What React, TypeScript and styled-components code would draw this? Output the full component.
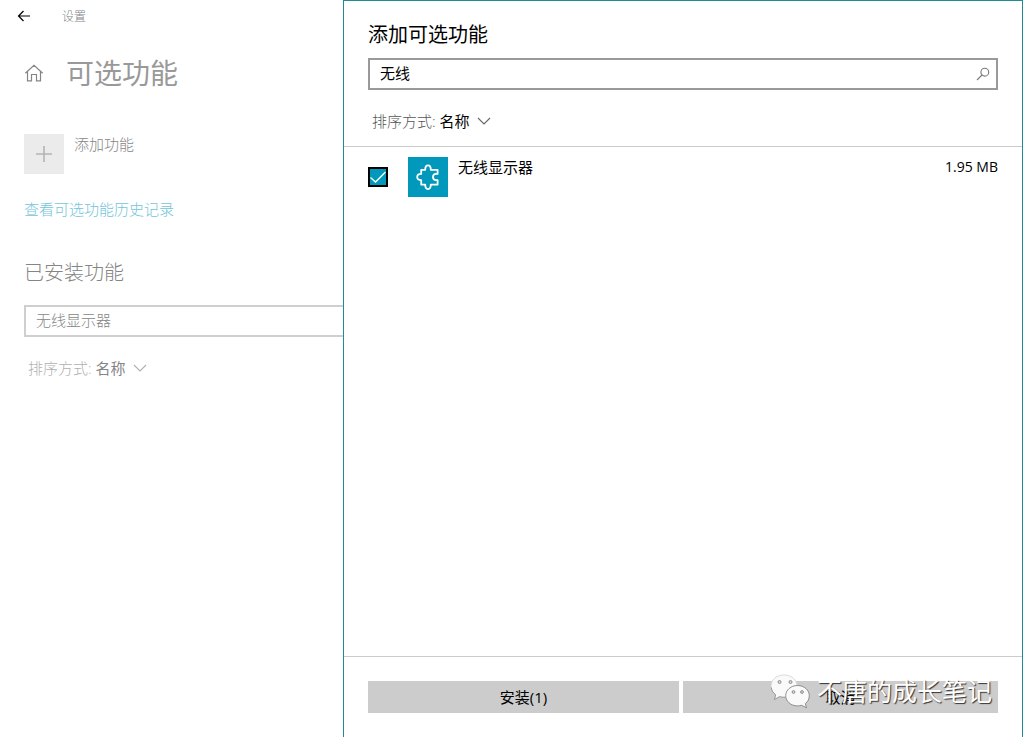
import React, { useState } from 'react';
import styled, { createGlobalStyle } from 'styled-components';

const GlobalStyle = createGlobalStyle`
  *, *::before, *::after { box-sizing: border-box; }
  body {
    margin: 0;
    background: #fff;
    color: #000;
    font: 400 15px/20px "Open Sans", "Noto Sans CJK SC", sans-serif;
  }
  button, input, select { font: inherit; color: inherit; margin: 0; }
  h1, h2, p { margin: 0; font-weight: 400; }
`;

const Page = styled.div`
  display: grid;
  grid-template-columns: 343px minmax(0, 1fr);
  min-height: 100vh;
  padding-right: 3px;
`;

const Settings = styled.main`
  color: #858585;
  font-weight: 300;
  overflow: hidden;
`;

const TitleBar = styled.header`
  display: flex;
  align-items: center;
  gap: 30px;
  height: 34px;
  padding-left: 16px;
  font-size: 12px;
`;

const IconButton = styled.button`
  display: flex;
  padding: 0;
  border: 0;
  background: none;
`;

const BackButton = styled(IconButton)`
  color: #000;
`;

const PageHeading = styled.div`
  display: flex;
  align-items: center;
  gap: 22px;
  height: 78px;
  padding-left: 24px;

  h1 {
    color: #999;
    font-size: 28px;
    line-height: 40px;
  }
`;

const SettingsBody = styled.div`
  padding: 22px 0 0 24px;
`;

const AddFeature = styled.button`
  display: flex;
  align-items: flex-start;
  gap: 10px;
  padding: 0;
  border: 0;
  background: none;
`;

const Tile = styled.span<{ $accent?: boolean }>`
  display: flex;
  flex: none;
  align-items: center;
  justify-content: center;
  width: 40px;
  height: 40px;
  background: ${(p) => (p.$accent ? '#0099bc' : '#ebebeb')};
  color: ${(p) => (p.$accent ? '#fff' : '#b4b4b4')};
`;

const HistoryLink = styled.a`
  display: block;
  margin-top: 25px;
  color: #72c4d8;
  text-decoration: none;
`;

const SectionTitle = styled.h2`
  margin: 40px 0 18px;
  font-size: 20px;
  line-height: 28px;
  font-weight: 300;
`;

const SearchBox = styled.div<{ $muted?: boolean }>`
  display: flex;
  align-items: center;
  height: 32px;
  padding: 0 6px 0 10px;
  border: 2px solid ${(p) => (p.$muted ? '#cfcfcf' : '#999')};
  border-right-width: ${(p) => (p.$muted ? 0 : '2px')};

  input {
    flex: 1;
    min-width: 0;
    height: 28px;
    padding: 0 0 4px;
    border: 0;
    outline: 0;
    background: none;
  }
`;

const SortRow = styled.div<{ $muted?: boolean }>`
  display: flex;
  align-items: center;
  gap: 4px;
  margin-top: 21px;
  padding-left: 4px;

  label { color: ${(p) => (p.$muted ? '#b0b0b0' : '#555')}; font-weight: 300; }
  select {
    appearance: none;
    padding: 0;
    border: 0;
    background: none;
    line-height: 20px;
    font-weight: 400;
  }
  svg { margin-left: 2px; color: ${(p) => (p.$muted ? '#b0b0b0' : '#666')}; }
`;

const Panel = styled.section`
  display: flex;
  flex-direction: column;
  border: 1px solid #1f8b99;
  border-bottom: 0;
`;

const PanelHeader = styled.div`
  padding: 20px 24px 15px;
  border-bottom: 1px solid #ccc;

  h2 {
    margin-bottom: 9px;
    font-size: 20px;
    line-height: 28px;
  }
`;

const FeatureList = styled.div`
  flex: 1;
  padding: 10px 24px;
`;

const FeatureRow = styled.label`
  display: flex;
  align-items: flex-start;
`;

const Checkbox = styled.input`
  appearance: none;
  flex: none;
  width: 20px;
  height: 20px;
  margin: 10px 20px 0 0 !important;
  border: 2px solid #000;

  &:checked {
    background: #0099bc
      url("data:image/svg+xml,%3Csvg xmlns='http://www.w3.org/2000/svg' viewBox='0 0 16 16'%3E%3Cpath d='M.5 8.500 5.500 13 15.500 3' fill='none' stroke='white' stroke-width='1.4'/%3E%3C/svg%3E")
      center / 16px 16px no-repeat;
  }
`;

const FeatureName = styled.span`
  flex: 1;
  padding-left: 10px;
`;

const FeatureSize = styled.span`
  font-size: 14px;
`;

const PanelFooter = styled.footer`
  position: relative;
  display: grid;
  grid-template-columns: 311fr 315fr;
  gap: 4px;
  padding: 24px;
  border-top: 1px solid #ccc;
`;

const ActionButton = styled.button`
  height: 32px;
  padding: 0;
  border: 0;
  background: #ccc;
`;

const Watermark = styled.div`
  position: absolute;
  right: 30px;
  bottom: 28px;
  display: flex;
  align-items: center;
  gap: 7px;
  color: #fff;
  font-size: 25px;
  line-height: 36px;
  text-shadow: 1px 1px 1px #333;
  white-space: nowrap;
  pointer-events: none;
`;

const BackIcon = () => (
  <svg width="16" height="16" viewBox="0 0 16 16" fill="none" stroke="currentColor" strokeWidth="1.2">
    <path d="M14 7H2.500M7.500 2l-5 5 5 5" />
  </svg>
);

const HomeIcon = () => (
  <svg width="20" height="20" viewBox="0 0 20 20" fill="none" stroke="currentColor" strokeWidth="1.2">
    <path d="M1.300 10.300 10 2.200l8.700 8.100M3.500 8.600v9.300h4v-6.400h5v6.400h4V8.600" />
  </svg>
);

const PlusIcon = () => (
  <svg width="18" height="18" viewBox="0 0 18 18" fill="none" stroke="currentColor" strokeWidth="1.6">
    <path d="M9 1v16M1 9h16" />
  </svg>
);

const ChevronIcon = () => (
  <svg width="14" height="8" viewBox="0 0 14 8" fill="none" stroke="currentColor" strokeWidth="1.1">
    <path d="M1 1l6 6 6-6" />
  </svg>
);

const SearchIcon = () => (
  <svg width="14" height="14" viewBox="0 0 14 14" fill="none" stroke="#777" strokeWidth="1.1">
    <circle cx="8.800" cy="5.200" r="3.900" />
    <path d="M6 8 1 13" />
  </svg>
);

const PuzzleIcon = () => (
  <svg width="24" height="28" viewBox="0 0 24 28" fill="none" stroke="currentColor" strokeWidth="1.8" strokeLinejoin="round">
    <path d="M5.200 6.800H9.200C9.200 3.800 10.200 2.300 12 2.300s2.800 1.500 2.800 4.500h6.800v4.100h-1.400c-2 0-3.200 1.300-3.200 3.100s1.200 3.100 3.200 3.100h1.400v4.500h-6.800c0 2.900-1 4.500-2.800 4.500s-2.800-1.600-2.800-4.500H5.200v-4.500C2.500 17.100 1.200 15.800 1.200 14s1.300-3.100 4-3.100z" />
  </svg>
);

const WeChatIcon = () => (
  <svg width="41" height="36" viewBox="0 0 41 36" fill="#fafafa" strokeWidth="0.8">
    <path d="M15 2C7.500 2 2 7 2 13c0 3.600 1.800 6.700 4.700 8.800L5.400 26.500l5.200-2.800c1.400.4 2.900.6 4.400.6 7.500 0 13-5 13-11.300S22.500 2 15 2z" stroke="#d0d0d0" />
    <path d="M2.200 14.500c.4 3 2 5.500 4.500 7.300L5.400 26.500l5.200-2.800c1.800.5 3.700.7 5.500.5" fill="none" stroke="#888" />
    <path d="M28.500 12.500c-6.700 0-11.800 4.600-11.800 10.200s5.100 10.200 11.800 10.200c1.500 0 2.900-.2 4.200-.6l4.800 2.500-1.200-4.100c2.500-1.900 4-4.700 4-8 0-5.600-5.100-10.200-11.800-10.200z" stroke="#777" />
    <g fill="#ddd" stroke="#777">
      <circle cx="10.500" cy="9" r="1.500" />
      <circle cx="21.500" cy="9" r="1.500" />
      <circle cx="24.500" cy="19" r="1.400" />
      <circle cx="33" cy="19" r="1.400" />
    </g>
  </svg>
);

function SortBy({ id, muted }: { id: string; muted?: boolean }) {
  return (
    <SortRow $muted={muted}>
      <label htmlFor={id}>排序方式:</label>
      <select id={id} defaultValue="name">
        <option value="name">名称</option>
      </select>
      <ChevronIcon />
    </SortRow>
  );
}

export default function App() {
  const [installedQuery, setInstalledQuery] = useState('无线显示器');
  const [query, setQuery] = useState('无线');
  const [selected, setSelected] = useState(true);

  return (
    <>
      <GlobalStyle />
      <Page>
        <Settings>
          <TitleBar>
            <BackButton aria-label="返回"><BackIcon /></BackButton>
            <span>设置</span>
          </TitleBar>
          <PageHeading>
            <IconButton aria-label="主页"><HomeIcon /></IconButton>
            <h1>可选功能</h1>
          </PageHeading>
          <SettingsBody>
            <AddFeature>
              <Tile><PlusIcon /></Tile>
              <span>添加功能</span>
            </AddFeature>
            <HistoryLink href="#history">查看可选功能历史记录</HistoryLink>
            <SectionTitle>已安装功能</SectionTitle>
            <SearchBox $muted>
              <input aria-label="已安装功能" value={installedQuery} onChange={(e) => setInstalledQuery(e.target.value)} />
            </SearchBox>
            <SortBy id="installed-sort" muted />
          </SettingsBody>
        </Settings>
        <Panel>
          <PanelHeader>
            <h2>添加可选功能</h2>
            <SearchBox>
              <input aria-label="添加可选功能" value={query} onChange={(e) => setQuery(e.target.value)} />
              <SearchIcon />
            </SearchBox>
            <SortBy id="available-sort" />
          </PanelHeader>
          <FeatureList>
            <FeatureRow>
              <Checkbox type="checkbox" checked={selected} onChange={(e) => setSelected(e.target.checked)} />
              <Tile $accent><PuzzleIcon /></Tile>
              <FeatureName>无线显示器</FeatureName>
              <FeatureSize>1.95 MB</FeatureSize>
            </FeatureRow>
          </FeatureList>
          <PanelFooter>
            <ActionButton>安装(1)</ActionButton>
            <ActionButton>取消</ActionButton>
            <Watermark>
              <WeChatIcon />
              <span>不唐的成长笔记</span>
            </Watermark>
          </PanelFooter>
        </Panel>
      </Page>
    </>
  );
}
